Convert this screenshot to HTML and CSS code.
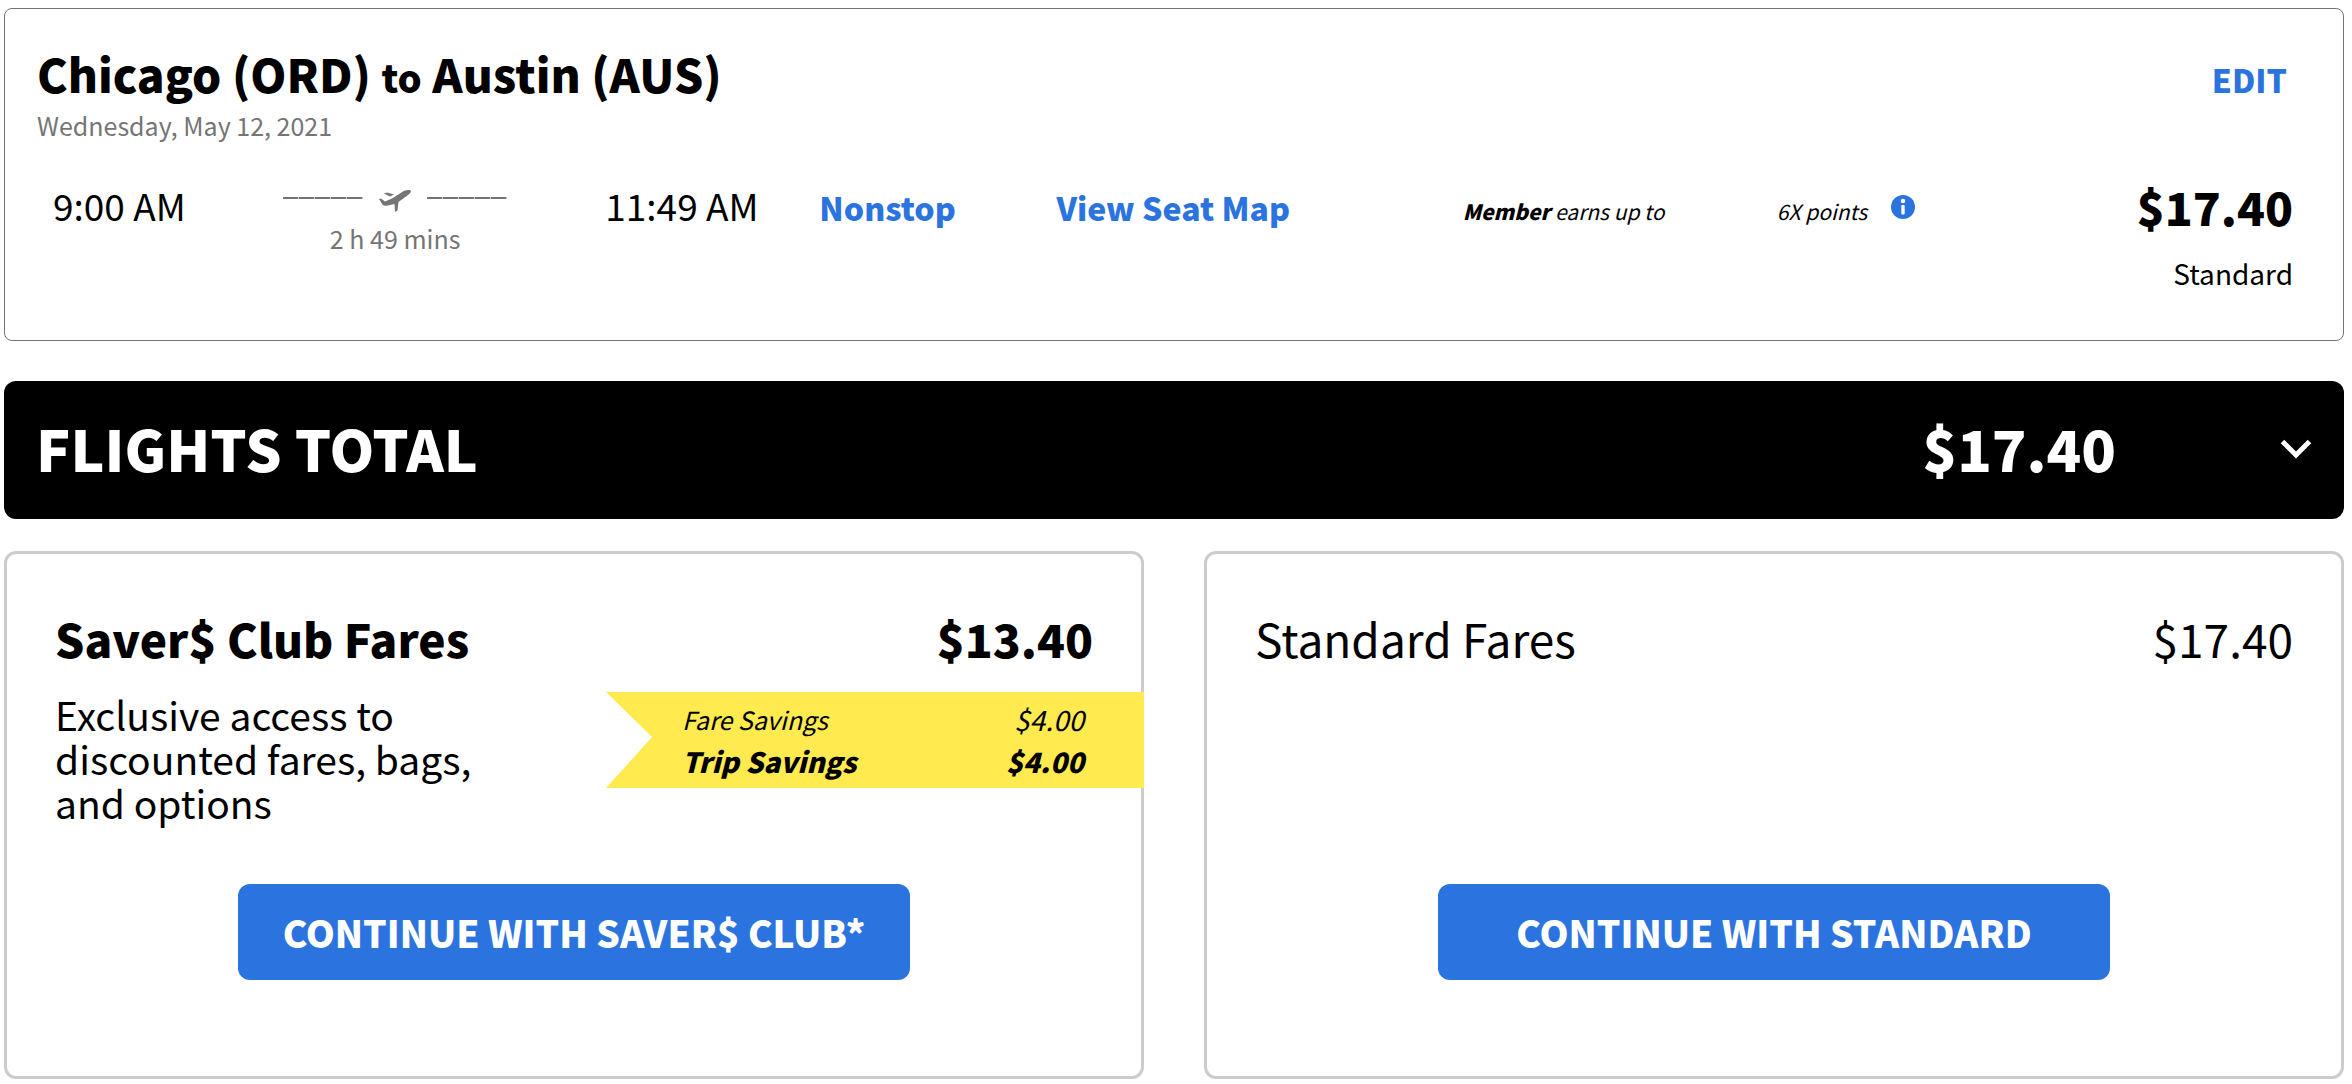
FILE: index.html
```
<!DOCTYPE html>
<html lang="en">
<head>
    <meta charset="UTF-8">
    <meta name="viewport" content="width=device-width, initial-scale=1.0">
    <title>Flight Summary</title>
    <link rel="stylesheet" href="styles.css">
</head>
<body>
    <section class="flight-card">
        <div class="flight-header">
            <h2>Chicago (ORD) <span class="to">to</span> Austin (AUS)</h2>
            <button type="button" class="link-button">EDIT</button>
        </div>
        <p class="flight-date">Wednesday, May 12, 2021</p>

        <div class="flight-row">
            <div class="time">9:00 AM</div>
            <div class="duration">
                <div class="route-line">
                    <span class="dash"></span>
                    <svg class="plane" viewBox="0 0 32 22" aria-hidden="true">
                        <path d="M0 9 L2 8.500 L6 11.500 L13 8.500 L24 1.500 C27 0 31 -0.500 32 1 C32 3 29 5 27 6.500 L19.500 12 L18.500 20.500 L16 22 L15.500 14 L9 15.500 Q5 16.500 3.500 14.500 Z M5 3.500 L8 2.500 L15 4.500 L11 6.500 Z"/>
                    </svg>
                    <span class="dash"></span>
                </div>
                <div class="duration-text">2 h 49 mins</div>
            </div>
            <div class="time">11:49 AM</div>
            <a href="#" class="row-link">Nonstop</a>
            <a href="#" class="row-link">View Seat Map</a>
            <div class="member"><b>Member</b> earns up to</div>
            <div class="member points">
                <span>6X points</span>
                <button type="button" class="info-button" aria-label="Points information">
                    <svg viewBox="0 0 24 24" aria-hidden="true">
                        <circle class="info-bg" cx="12" cy="12" r="12"/>
                        <circle cx="12" cy="6" r="2.200"/>
                        <rect x="10.300" y="10" width="3.400" height="9.500" rx="1"/>
                    </svg>
                </button>
            </div>
            <div class="flight-price">
                <div class="amount">$17.40</div>
                <div class="fare-type">Standard</div>
            </div>
        </div>
    </section>

    <section class="total-bar">
        <h1>FLIGHTS TOTAL</h1>
        <span class="total-price">$17.40</span>
        <button type="button" class="toggle" aria-label="Show details">
            <svg viewBox="0 0 32 20" aria-hidden="true">
                <path d="M2.500 2.500 L16 16 L29.500 2.500"/>
            </svg>
        </button>
    </section>

    <div class="fares">
        <section class="fare-card">
            <div class="fare-header">
                <h2>Saver$ Club Fares</h2>
                <span class="fare-price">$13.40</span>
            </div>
            <div class="fare-body">
                <p>Exclusive access to discounted fares, bags, and options</p>
                <div class="savings">
                    <div class="savings-row">
                        <span class="savings-label">Fare Savings</span>
                        <span>$4.00</span>
                    </div>
                    <div class="savings-row trip">
                        <span>Trip Savings</span>
                        <span>$4.00</span>
                    </div>
                </div>
            </div>
            <button type="button" class="continue">CONTINUE WITH SAVER$ CLUB*</button>
        </section>

        <section class="fare-card standard">
            <div class="fare-header">
                <h2>Standard Fares</h2>
                <span class="fare-price">$17.40</span>
            </div>
            <button type="button" class="continue">CONTINUE WITH STANDARD</button>
        </section>
    </div>
</body>
</html>
```

FILE: styles.css
```
* {
    box-sizing: border-box;
}
body {
    margin: 0;
    padding: 8px 8px 6px 4px;
    font-family: "Source Sans Pro", "Noto Sans CJK SC", sans-serif;
    color: #000;
    background: #fff;
}
h1, h2, p {
    margin: 0;
}
b {
    font-weight: 900;
}
button {
    padding: 0;
    border: none;
    background: none;
    font-family: inherit;
    cursor: pointer;
}
svg {
    display: block;
}

/* flight details */
.flight-card {
    padding: 36px 50px 47px 32px;
    border: 1px solid #757575;
    border-radius: 8px;
}
.flight-header {
    display: flex;
    justify-content: space-between;
    align-items: baseline;
    padding-right: 6px;
}
.flight-header h2 {
    font-size: 46px;
    line-height: 56px;
    font-weight: 900;
}
.flight-header .to {
    font-size: 38px;
}
.link-button, .row-link {
    color: #2b74df;
    font-size: 32px;
    line-height: 48px;
    font-weight: 900;
    text-decoration: none;
}
.flight-date {
    margin-top: 2px;
    font-size: 25px;
    line-height: 36px;
    color: #757575;
}
.flight-row {
    display: grid;
    grid-template-columns: 230fr 322fr 214fr 237fr 406fr 314fr 316fr 200fr;
    align-items: start;
    margin-top: 40px;
    padding-left: 16px;
}
.time {
    font-size: 37px;
    line-height: 44px;
}
.duration {
    width: 224px;
    padding-top: 7px;
    color: #757575;
}
.route-line {
    display: flex;
    justify-content: space-between;
    align-items: flex-start;
}
.dash {
    width: 80px;
    height: 2px;
    margin-top: 7px;
    background: repeating-linear-gradient(to right, #757575 0, #757575 15px, #c4c4c4 15px, #c4c4c4 16px);
}
.plane {
    width: 32px;
    height: 22px;
    fill: #757575;
}
.duration-text {
    margin-top: 10px;
    font-size: 25px;
    line-height: 32px;
    text-align: center;
}
.member {
    font-size: 21px;
    line-height: 56px;
    font-style: italic;
}
.points {
    display: flex;
    align-items: flex-start;
    gap: 24px;
}
.info-button {
    margin-top: 12px;
}
.info-button svg {
    width: 24px;
    height: 24px;
    fill: #fff;
}
.info-button .info-bg {
    fill: #2b74df;
}
.flight-price {
    text-align: right;
}
.amount {
    font-size: 46px;
    line-height: 46px;
    font-weight: 900;
}
.fare-type {
    margin-top: 24px;
    font-size: 28px;
    line-height: 40px;
}

/* total */
.total-bar {
    display: flex;
    align-items: center;
    margin-top: 40px;
    padding: 26px 32px 32px;
    border-radius: 12px;
    color: #fff;
    background: #000;
}
.total-bar h1, .total-price {
    font-size: 57px;
    line-height: 80px;
    font-weight: 900;
}
.total-price {
    margin-left: auto;
}
.toggle {
    margin-left: 164px;
    padding-top: 4px;
}
.toggle svg {
    width: 32px;
    height: 20px;
    fill: none;
    stroke: #fff;
    stroke-width: 5;
}

/* fare options */
.fares {
    display: grid;
    grid-template-columns: 1fr 1fr;
    gap: 60px;
    margin-top: 32px;
}
.fare-card {
    display: flex;
    flex-direction: column;
    padding: 56px 48px 96px;
    border: 3px solid #ccc;
    border-radius: 12px;
}
.fare-header {
    display: flex;
    justify-content: space-between;
}
.fare-header h2, .fare-price {
    font-size: 46px;
    line-height: 56px;
    font-weight: 900;
}
.standard h2, .standard .fare-price {
    font-weight: 400;
}
.fare-body {
    display: flex;
    justify-content: space-between;
    align-items: flex-start;
    margin: 26px -51px 60px 0;
}
.fare-body p {
    max-width: 440px;
    font-size: 39px;
    line-height: 44px;
}
.savings {
    flex: 0 0 538px;
    padding: 6px 60px 6px 76px;
    font-size: 28px;
    line-height: 42px;
    font-style: italic;
    background: #ffea4f;
    clip-path: polygon(0 0, 100% 0, 100% 100%, 0 100%, 46px 47%);
}
.savings-row {
    display: flex;
    justify-content: space-between;
}
.savings-label {
    font-size: 25px;
}
.trip {
    font-weight: 900;
}
.continue {
    align-self: center;
    width: 672px;
    max-width: 100%;
    height: 96px;
    margin-top: auto;
    border-radius: 12px;
    color: #fff;
    font-size: 37px;
    font-weight: 900;
    background: #2b74df;
}
```
